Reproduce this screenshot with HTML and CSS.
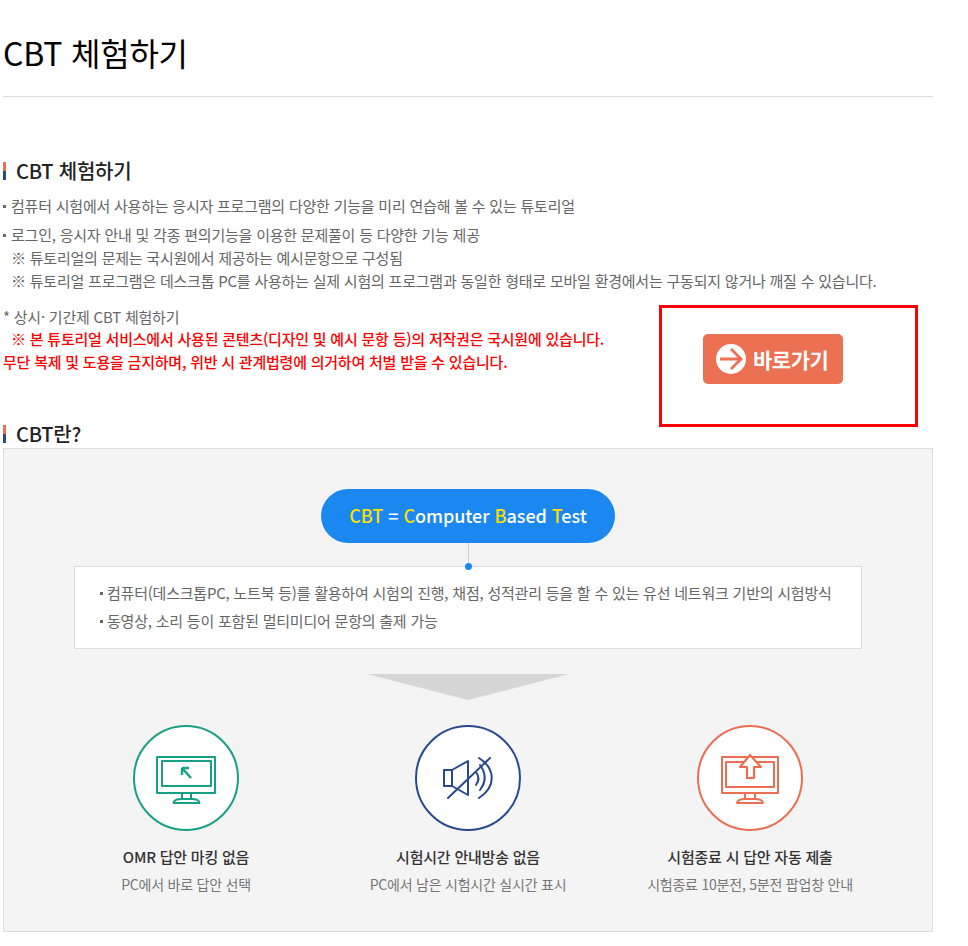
FILE: index.html
```html
<!DOCTYPE html>
<html lang="ko">
<head>
  <meta charset="UTF-8">
  <link rel="stylesheet" href="styles.css">
  <title>CBT 체험하기</title>
</head>
<body>
  <div class="wrap">
    <h1 class="page-title">CBT 체험하기</h1>

    <h2 class="sec-title first">CBT 체험하기</h2>
    <ul class="dot-list">
      <li>컴퓨터 시험에서 사용하는 응시자 프로그램의 다양한 기능을 미리 연습해 볼 수 있는 튜토리얼</li>
      <li class="gap">로그인, 응시자 안내 및 각종 편의기능을 이용한 문제풀이 등 다양한 기능 제공</li>
      <li class="note">※ 튜토리얼의 문제는 국시원에서 제공하는 예시문항으로 구성됨</li>
      <li class="note">※ 튜토리얼 프로그램은 데스크톱 PC를 사용하는 실제 시험의 프로그램과 동일한 형태로 모바일 환경에서는 구동되지 않거나 깨질 수 있습니다.</li>
    </ul>

    <div class="try-row">
      <div class="try-text">
        <p>* 상시· 기간제 CBT 체험하기</p>
        <p class="red"><span class="indent">※ 본 튜토리얼 서비스에서 사용된 콘텐츠(디자인 및 예시 문항 등)의 저작권은 국시원에 있습니다.</span><br>무단 복제 및 도용을 금지하며, 위반 시 관계법령에 의거하여 처벌 받을 수 있습니다.</p>
      </div>
      <div class="red-box">
        <a class="go-btn" href="#">
          <svg width="30" height="30" viewBox="0 0 30 30">
            <circle cx="15" cy="15" r="15" fill="#fff"/>
            <path d="M4 15H24M15 5L25 15L15 25" fill="none" stroke="#ec7052" stroke-width="2.800"/>
          </svg>
          바로가기
        </a>
      </div>
    </div>

    <h2 class="sec-title second">CBT란?</h2>
    <div class="cbt-box">
      <div class="pill"><b>CBT</b> = <b>C</b>omputer <b>B</b>ased <b>T</b>est</div>
      <div class="stem"></div>
      <ul class="desc">
        <li>컴퓨터(데스크톱PC, 노트북 등)를 활용하여 시험의 진행, 채점, 성적관리 등을 할 수 있는 유선 네트워크 기반의 시험방식</li>
        <li>동영상, 소리 등이 포함된 멀티미디어 문항의 출제 가능</li>
      </ul>
      <div class="down-arrow"></div>
      <div class="features">
        <div class="feature">
          <div class="circle green">
            <svg width="60" height="52" viewBox="0 0 60 52" fill="none" stroke="#17a085" stroke-width="2" stroke-linejoin="round">
              <rect x="1" y="5" width="58" height="36"/>
              <rect x="6" y="9" width="49" height="25"/>
              <path d="M26 16V23M26 16H33M26 16L35 26" stroke-width="2.400"/>
              <path d="M26 41V47H35V41"/>
              <path d="M17.500 51C18 48 21 47 25 47H36C40 47 43 48 43.500 51Z"/>
            </svg>
          </div>
          <strong>OMR 답안 마킹 없음</strong>
          <span>PC에서 바로 답안 선택</span>
        </div>
        <div class="feature">
          <div class="circle navy">
            <svg width="50" height="46" viewBox="0 0 50 46" fill="none" stroke="#284a8c" stroke-width="2" stroke-linejoin="round" stroke-linecap="round">
              <path d="M9 15H1V31H9Z"/>
              <path d="M9 15L25 6V40L9 31"/>
              <path d="M33 17C36 21 36 26 33 30"/>
              <path d="M37 10C43 18 43 27 37 35"/>
              <path d="M36 3C53 14 53 32 36 43"/>
              <path d="M47 3L5 43"/>
            </svg>
          </div>
          <strong>시험시간 안내방송 없음</strong>
          <span>PC에서 남은 시험시간 실시간 표시</span>
        </div>
        <div class="feature">
          <div class="circle coral">
            <svg width="58" height="52" viewBox="0 0 58 52" fill="none" stroke="#ec6e52" stroke-width="2" stroke-linejoin="round">
              <path d="M27 5H1V41H57V5H31"/>
              <path d="M23 10H5V35H53V10H35"/>
              <path d="M29 3L40 15H33V26H26V15H19Z" stroke-width="2.200"/>
              <path d="M24 41V47H34V41"/>
              <path d="M16 51C16.500 48 20 47 24 47H34C38 47 41.500 48 42 51Z"/>
            </svg>
          </div>
          <strong>시험종료 시 답안 자동 제출</strong>
          <span>시험종료 10분전, 5분전 팝업창 안내</span>
        </div>
      </div>
    </div>
  </div>
</body>
</html>
```

FILE: styles.css
```css
body {
  margin: 0;
  background-color: #fff;
  font-family: "Noto Sans CJK KR", "Noto Sans", sans-serif;
  font-size: 15px;
  color: #666;
  letter-spacing: -0.22px;
}
.wrap {
  width: 930px;
  margin-left: 3px;
}
p, ul {
  margin: 0;
  padding: 0;
}
ul {
  list-style: none;
}
.page-title {
  margin: 0;
  height: 96px;
  border-bottom: 1px solid #ddd;
  font-size: 32px;
  font-weight: 400;
  line-height: 104px;
  color: #000;
  letter-spacing: -0.2px;
}
.sec-title {
  margin: 0;
  padding-left: 13px;
  font-size: 20px;
  font-weight: 500;
  line-height: 24px;
  color: #222;
  letter-spacing: -0.2px;
  position: relative;
}
.sec-title::before {
  content: "";
  position: absolute;
  left: 0;
  top: 3px;
  width: 3px;
  height: 18px;
  background: linear-gradient(#ec6e52 50%, #284a8c 50%);
}
.sec-title.first {
  margin-top: 62px;
}
.sec-title.second {
  margin-top: 0;
}
.dot-list {
  margin-top: 11px;
  line-height: 23px;
}
.dot-list li {
  padding-left: 8px;
  position: relative;
}
.dot-list li:not(.note)::before,
.desc li::before {
  content: "";
  position: absolute;
  left: 0;
  top: 11px;
  width: 3px;
  height: 3px;
  background-color: #666;
}
.dot-list li.gap {
  margin-top: 6px;
}
.try-row {
  display: flex;
  justify-content: space-between;
  height: 116px;
  margin-top: 14px;
}
.try-text {
  margin-top: -1px;
  line-height: 23px;
}
.red {
  color: #f00;
  font-weight: 500;
  line-height: 22.500px;
}
.indent {
  padding-left: 8px;
}
.red-box {
  box-sizing: border-box;
  width: 259px;
  height: 122px;
  margin-top: -1px;
  margin-right: 15px;
  border: 3px solid #f00;
  padding: 26px 0 0 41px;
}
.go-btn {
  display: flex;
  align-items: center;
  gap: 7px;
  width: 140px;
  height: 50px;
  padding-left: 13px;
  box-sizing: border-box;
  border-radius: 5px;
  background-color: #ec7052;
  color: #fff;
  font-size: 21px;
  font-weight: 700;
  letter-spacing: -0.5px;
  text-decoration: none;
}
.cbt-box {
  box-sizing: border-box;
  height: 484px;
  margin-top: 2px;
  padding-top: 40px;
  border: 1px solid #ddd;
  background-color: #f4f4f4;
  display: flex;
  flex-direction: column;
  align-items: center;
}
.pill {
  width: 294px;
  height: 54px;
  flex: none;
  border-radius: 27px;
  background-color: #1a88f0;
  color: #fff;
  font-size: 18px;
  font-weight: 500;
  line-height: 52px;
  text-align: center;
  letter-spacing: -0.05px;
}
.pill b {
  color: #ffdd00;
  font-weight: 500;
}
.stem {
  width: 1px;
  height: 23px;
  flex: none;
  background-color: #ccc;
  position: relative;
}
.stem::after {
  content: "";
  position: absolute;
  left: -3px;
  bottom: -4px;
  width: 7px;
  height: 7px;
  border-radius: 50%;
  background-color: #1a88f0;
}
.desc {
  box-sizing: border-box;
  width: 788px;
  height: 83px;
  flex: none;
  padding: 12px 24px;
  border: 1px solid #ddd;
  background-color: #fff;
  line-height: 28px;
}
.desc li {
  padding-left: 8px;
  position: relative;
}
.desc li::before {
  left: 1px;
  top: 13px;
}
.down-arrow {
  width: 202px;
  height: 26px;
  flex: none;
  margin-top: 25px;
  background-color: #d6d6d6;
  clip-path: polygon(0 0, 100% 0, 50% 100%);
}
.features {
  display: grid;
  grid-template-columns: repeat(3, 282px);
  margin-top: 25px;
}
.feature {
  display: flex;
  flex-direction: column;
  align-items: center;
}
.feature strong {
  margin-top: 15px;
  font-size: 15px;
  font-weight: 500;
  line-height: 22px;
  color: #333;
}
.feature span {
  margin-top: 6px;
  font-size: 14px;
  line-height: 20px;
  color: #777;
}
.circle {
  box-sizing: border-box;
  width: 106px;
  height: 106px;
  border-radius: 50%;
  border: 2px solid;
  background-color: #fff;
  display: flex;
  align-items: center;
  justify-content: center;
}
.circle.green { border-color: #17a085; }
.circle.navy { border-color: #284a8c; }
.circle.coral { border-color: #ec6e52; }
```
